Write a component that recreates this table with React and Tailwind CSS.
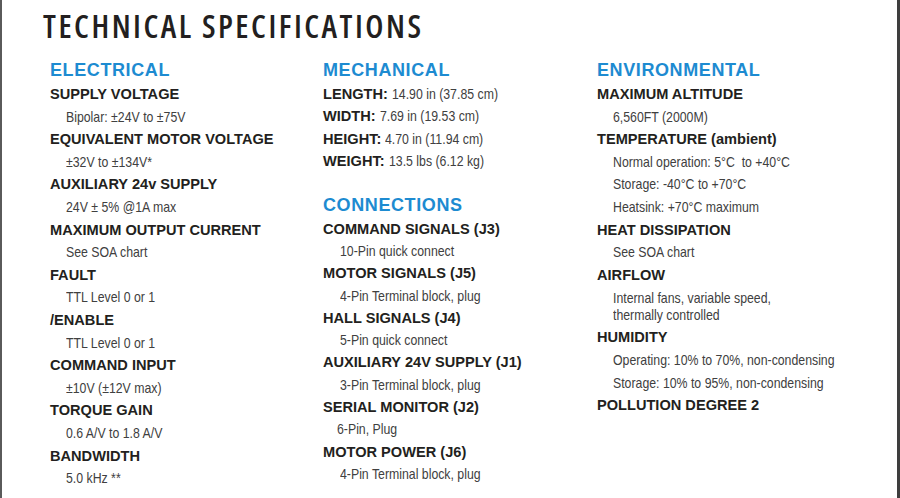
import React from "react";

const electrical = [
  ["SUPPLY VOLTAGE", "Bipolar: ±24V to ±75V"],
  ["EQUIVALENT MOTOR VOLTAGE", "±32V to ±134V*"],
  ["AUXILIARY 24v SUPPLY", "24V ± 5% @1A max"],
  ["MAXIMUM OUTPUT CURRENT", "See SOA chart"],
  ["FAULT", "TTL Level 0 or 1"],
  ["/ENABLE", "TTL Level 0 or 1"],
  ["COMMAND INPUT", "±10V (±12V max)"],
  ["TORQUE GAIN", "0.6 A/V to 1.8 A/V"],
  ["BANDWIDTH", "5.0 kHz **"],
];

const mechanical = [
  ["LENGTH:", "14.90 in (37.85 cm)"],
  ["WIDTH:", "7.69 in (19.53 cm)"],
  ["HEIGHT:", "4.70 in (11.94 cm)"],
  ["WEIGHT:", "13.5 lbs (6.12 kg)"],
];

const connections = [
  ["COMMAND SIGNALS (J3)", "10-Pin quick connect"],
  ["MOTOR SIGNALS (J5)", "4-Pin Terminal block, plug"],
  ["HALL SIGNALS (J4)", "5-Pin quick connect"],
  ["AUXILIARY 24V SUPPLY (J1)", "3-Pin Terminal block, plug"],
  ["SERIAL MONITOR (J2)", "6-Pin, Plug"],
  ["MOTOR POWER (J6)", "4-Pin Terminal block, plug"],
];

const label = "text-[14.6px] font-bold text-[#231f20] leading-[22.6px] whitespace-nowrap";
// no narrow face installed, so squeeze the regular one
const narrow = "inline-block origin-left scale-x-[0.82] text-[15px] font-normal text-[#404040]";
const heading = "text-[18px] font-bold text-[#1d8bd1] tracking-[0.6px] leading-[25px]";

const Heading = ({ children, className = "" }) => <div className={`${heading} ${className}`}>{children}</div>;

const Value = ({ children, className = "pl-4" }) => (
  <div className={`leading-[22.6px] whitespace-nowrap ${className}`}>
    <span className={narrow}>{children}</span>
  </div>
);

const Spec = ({ name, children }) => (
  <>
    <div className={label}>{name}</div>
    <Value>{children}</Value>
  </>
);

const App = () => {
  return (
    <div className="w-[900px] h-[498px] bg-white flex overflow-hidden [font-family:'Liberation_Sans',Arial,sans-serif]">
      <div className="w-[2px] bg-[#5a5a5a]" />
      <div className="flex-1 pl-[41px] pt-[6px]">
        <h1 className="text-[32px] leading-[40px] font-semibold font-stretch-condensed tracking-[2.5px] text-[#231f20] [font-family:'Open_Sans',sans-serif]">
          TECHNICAL SPECIFICATIONS
        </h1>

        <div className="mt-[12px] pl-[7px] grid grid-cols-[273px_274px_1fr]">
          <div>
            <Heading>ELECTRICAL</Heading>
            {electrical.map(([n, v]) => (
              <Spec key={n + v} name={n}>{v}</Spec>
            ))}
          </div>

          <div>
            <Heading>MECHANICAL</Heading>
            {mechanical.map(([n, v]) => (
              <div key={n} className={`${label} !leading-[22.4px]`}>
                {n} <span className={narrow}>{v}</span>
              </div>
            ))}
            <Heading className="mt-[20px]">CONNECTIONS</Heading>
            {connections.map(([n, v]) => (
              <div key={n}>
                <div className={`${label} !leading-[22.3px]`}>{n}</div>
                <Value className={`!leading-[22.3px] ${v === "6-Pin, Plug" ? "pl-[14px]" : "pl-[17px]"}`}>{v}</Value>
              </div>
            ))}
          </div>

          <div>
            <Heading>ENVIRONMENTAL</Heading>
            <Spec name="MAXIMUM ALTITUDE">6,560FT (2000M)</Spec>
            <div className={label}>TEMPERATURE (ambient)</div>
            <Value>Normal operation: 5°C&nbsp; to +40°C</Value>
            <Value>Storage: -40°C to +70°C</Value>
            <Value>Heatsink: +70°C maximum</Value>
            <Spec name="HEAT DISSIPATION">See SOA chart</Spec>
            <div className={label}>AIRFLOW</div>
            <div className="pl-4 py-[3px] leading-[17px] whitespace-nowrap">
              <span className={narrow}>
                Internal fans, variable speed,
                <br />
                thermally controlled
              </span>
            </div>
            <div className={label}>HUMIDITY</div>
            <Value>Operating: 10% to 70%, non-condensing</Value>
            <Value>Storage: 10% to 95%, non-condensing</Value>
            <div className={label}>POLLUTION DEGREE 2</div>
          </div>
        </div>
      </div>
      <div className="w-[3px] bg-[#3e3e3e]" />
    </div>
  );
};

export default App;
